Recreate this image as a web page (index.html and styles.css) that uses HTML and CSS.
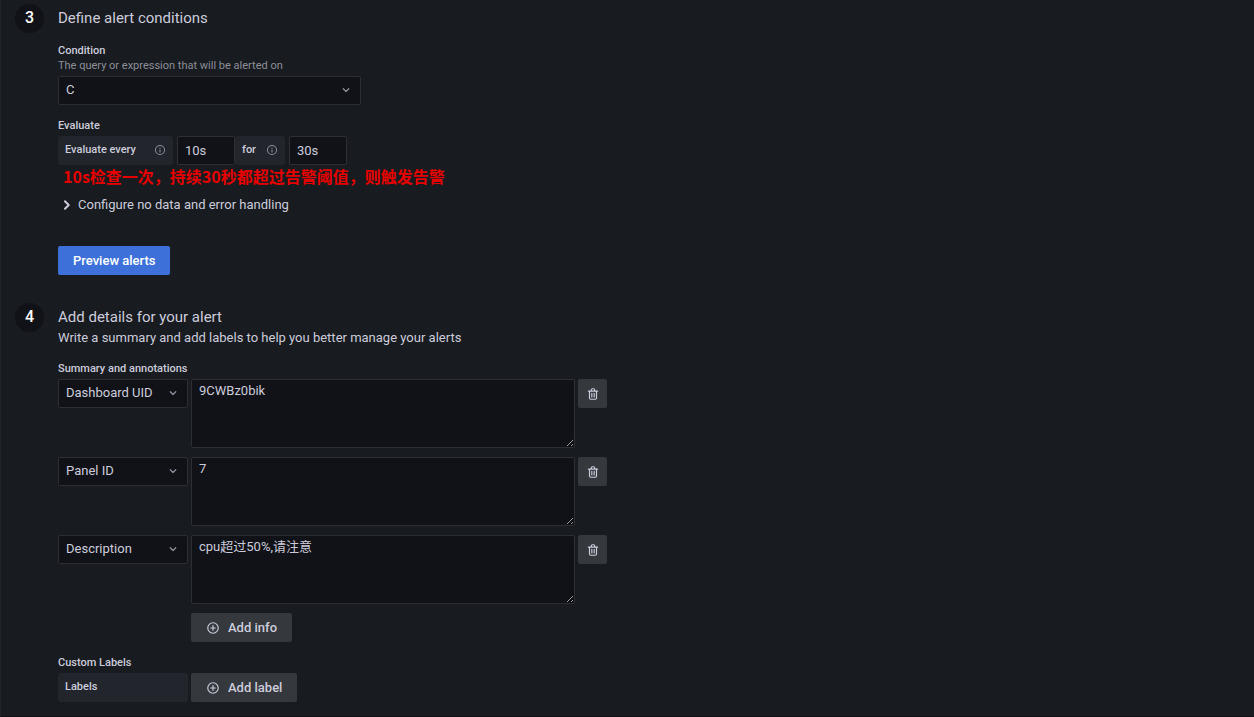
FILE: index.html
```html
<!DOCTYPE html>
<html lang="en">
<head>
<meta charset="utf-8">
<title>Alert rule</title>
<link rel="stylesheet" href="styles.css">
</head>
<body>
<svg class="sprite" aria-hidden="true">
  <symbol id="down" viewBox="0 0 24 24"><path d="M6.5 9.5l5.5 5.5 5.5-5.5" fill="none" stroke="currentColor" stroke-width="2.6" stroke-linecap="round" stroke-linejoin="round"/></symbol>
  <symbol id="right" viewBox="0 0 24 24"><path d="M8.5 5.500l6.500 6.500-6.500 6.500" fill="none" stroke="currentColor" stroke-width="3.4" stroke-linecap="round" stroke-linejoin="round"/></symbol>
  <symbol id="info" viewBox="0 0 24 24"><path d="M12 2a10 10 0 1 0 0 20 10 10 0 0 0 0-20zm0 18a8 8 0 1 1 0-16 8 8 0 0 1 0 16zm0-9.500a1 1 0 0 0-1 1V16a1 1 0 0 0 2 0v-4.500a1 1 0 0 0-1-1zm0-3.750a1.250 1.250 0 1 0 0 2.500 1.250 1.250 0 0 0 0-2.500z" fill="currentColor"/></symbol>
  <symbol id="plus" viewBox="0 0 24 24"><path d="M12 2a10 10 0 1 0 0 20 10 10 0 0 0 0-20zm0 18a8 8 0 1 1 0-16 8 8 0 0 1 0 16zm4-9h-3V8a1 1 0 0 0-2 0v3H8a1 1 0 0 0 0 2h3v3a1 1 0 0 0 2 0v-3h3a1 1 0 0 0 0-2z" fill="currentColor"/></symbol>
  <symbol id="trash" viewBox="0 0 24 24"><path d="M10 18a1 1 0 0 0 1-1v-6a1 1 0 0 0-2 0v6a1 1 0 0 0 1 1zM20 6h-4V5a3 3 0 0 0-3-3h-2a3 3 0 0 0-3 3v1H4a1 1 0 0 0 0 2h1v11a3 3 0 0 0 3 3h8a3 3 0 0 0 3-3V8h1a1 1 0 0 0 0-2zM10 5a1 1 0 0 1 1-1h2a1 1 0 0 1 1 1v1h-4zm7 14a1 1 0 0 1-1 1H8a1 1 0 0 1-1-1V8h10zm-3-1a1 1 0 0 0 1-1v-6a1 1 0 0 0-2 0v6a1 1 0 0 0 1 1z" fill="currentColor"/></symbol>
</svg>
<form class="rule-form">
  <section class="step">
    <span class="step-number">3</span>
    <div class="step-body">
      <h2 class="title">Define alert conditions</h2>
      <div class="field">
        <label class="label" for="condition">Condition</label>
        <p class="hint">The query or expression that will be alerted on</p>
        <div class="select wide">
          <select id="condition"><option>C</option></select>
          <svg class="caret"><use href="#down"/></svg>
        </div>
      </div>
      <div class="field">
        <label class="label" for="every">Evaluate</label>
        <div class="evaluate">
          <label class="tag every" for="every">Evaluate every <svg class="info"><use href="#info"/></svg></label>
          <input class="input" id="every" type="text" value="10s">
          <label class="tag for" for="duration">for <svg class="info"><use href="#info"/></svg></label>
          <input class="input" id="duration" type="text" value="30s">
        </div>
      </div>
      <p class="note" lang="zh-CN">10s检查一次，持续30秒都超过告警阈值，则触发告警</p>
      <button class="collapse" type="button" aria-expanded="false"><svg class="chevron"><use href="#right"/></svg>Configure no data and error handling</button>
      <button class="button primary" type="button">Preview alerts</button>
    </div>
  </section>
  <section class="step">
    <span class="step-number">4</span>
    <div class="step-body">
      <h2 class="title">Add details for your alert</h2>
      <p class="subtitle">Write a summary and add labels to help you better manage your alerts</p>
      <h3 class="label">Summary and annotations</h3>
      <div class="annotations">
        <div class="annotation">
          <div class="select"><select aria-label="Annotation key"><option>Dashboard UID</option></select><svg class="caret"><use href="#down"/></svg></div>
          <textarea class="text" aria-label="Dashboard UID">9CWBz0bik</textarea>
          <button class="button square" type="button" aria-label="Delete annotation"><svg class="icon"><use href="#trash"/></svg></button>
        </div>
        <div class="annotation">
          <div class="select"><select aria-label="Annotation key"><option>Panel ID</option></select><svg class="caret"><use href="#down"/></svg></div>
          <textarea class="text" aria-label="Panel ID">7</textarea>
          <button class="button square" type="button" aria-label="Delete annotation"><svg class="icon"><use href="#trash"/></svg></button>
        </div>
        <div class="annotation">
          <div class="select"><select aria-label="Annotation key"><option>Description</option></select><svg class="caret"><use href="#down"/></svg></div>
          <textarea class="text" aria-label="Description">cpu超过50%,请注意</textarea>
          <button class="button square" type="button" aria-label="Delete annotation"><svg class="icon"><use href="#trash"/></svg></button>
        </div>
        <button class="button add-info" type="button"><svg class="icon"><use href="#plus"/></svg>Add info</button>
      </div>
      <h3 class="label">Custom Labels</h3>
      <div class="labels">
        <span class="tag">Labels</span>
        <button class="button" type="button"><svg class="icon"><use href="#plus"/></svg>Add label</button>
      </div>
    </div>
  </section>
</form>
</body>
</html>
```
FILE: styles.css
```css
:root {
  --canvas: #111217;
  --panel: #181b1f;
  --raised: #22252b;
  --button: #35383d;
  --border: #2d2e34;
  --text: #ccccdc;
  --muted: #8d8e9a;
}

* { box-sizing: border-box; }

body {
  margin: 0;
  background: var(--panel);
  color: var(--text);
  font: 13px/20px Roboto, "Noto Sans CJK SC", sans-serif;
}

h2, h3, p { margin: 0; }

button, input, select, textarea { font: inherit; color: inherit; }

.sprite { position: absolute; width: 0; height: 0; }

.rule-form {
  min-height: 100vh;
  padding: 4px 15px 14px 14px;
  border-left: 1px solid var(--raised);
  border-bottom: 1px solid var(--canvas);
}

.step {
  display: grid;
  grid-template-columns: 29px 1fr;
  column-gap: 14px;
}

.step + .step { margin-top: 28px; }

.step-number {
  height: 29px;
  border-radius: 50%;
  background: var(--canvas);
  color: #fff;
  font-size: 16px;
  font-weight: 500;
  line-height: 28px;
  text-align: center;
}

.step-body { display: flex; flex-direction: column; align-items: flex-start; }

.title { padding-top: 4px; font-size: 15px; font-weight: 400; line-height: 20px; }

.field { margin-top: 13px; }
.title + .field { margin-top: 15px; }

.label { display: block; font-size: 11px; font-weight: 500; line-height: 15px; }

.hint { padding-bottom: 3px; color: var(--muted); font-size: 11px; line-height: 15px; }

.select { position: relative; width: 130px; height: 29px; }
.select.wide { width: 303px; }

.select select {
  appearance: none;
  width: 100%;
  height: 100%;
  padding: 0 28px 2px 7px;
  border: 1px solid var(--border);
  border-radius: 2px;
  background: var(--canvas);
}

.caret {
  position: absolute;
  top: 8px;
  right: 9px;
  width: 12px;
  height: 12px;
  color: var(--muted);
  pointer-events: none;
}

.evaluate { display: flex; padding-top: 3px; }

.tag {
  display: flex;
  align-items: center;
  justify-content: space-between;
  height: 29px;
  padding: 0 7px 2px;
  border-radius: 3px;
  background: var(--raised);
  font-size: 11px;
  font-weight: 500;
}

.every { width: 115px; margin-right: 4px; }
.for { width: 50px; margin-right: 4px; }

.info { width: 12px; height: 12px; color: var(--muted); }

.input {
  width: 58px;
  height: 29px;
  padding: 0 7px;
  border: 1px solid var(--border);
  border-radius: 2px;
  background: var(--canvas);
}

.note {
  padding-left: 5px;
  color: #e60000;
  font: 700 16px/22px "Noto Sans CJK SC", sans-serif;
}

.collapse {
  display: flex;
  align-items: center;
  gap: 4px;
  margin: 8px 0 31px;
  padding: 0 2px;
  border: 0;
  background: none;
}

.chevron { width: 14px; height: 14px; }

.button {
  display: flex;
  align-items: center;
  gap: 8px;
  height: 29px;
  padding: 0 15px;
  border: 0;
  border-radius: 2px;
  background: var(--button);
  font-weight: 500;
}

.primary { background: #3d71d9; color: #fff; }

.icon { width: 14px; height: 14px; }

.subtitle { padding-bottom: 13px; line-height: 21px; }

.annotations { display: grid; row-gap: 9px; padding: 3px 0 13px; }

.annotation { display: flex; align-items: flex-start; gap: 3px; }

.text {
  width: 384px;
  height: 69px;
  padding: 1px 7px;
  border: 1px solid var(--border);
  border-radius: 2px;
  background: var(--canvas);
}

.square { justify-content: center; width: 29px; padding: 0; }

.add-info { justify-self: start; margin-left: 133px; }

.labels { display: flex; gap: 3px; padding-top: 3px; }
.labels .tag { width: 130px; }
```
